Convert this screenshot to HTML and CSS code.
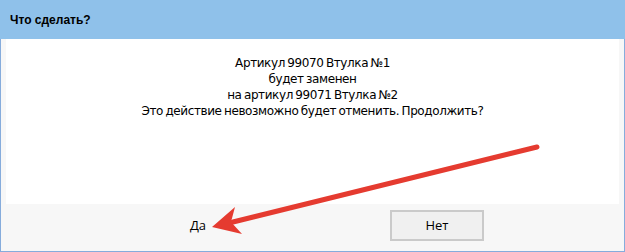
FILE: index.html
```html
<!DOCTYPE html>
<html lang="ru">

<head>
  <meta charset="UTF-8">
  <title>Что сделать?</title>
  <link rel="stylesheet" href="styles.css">
</head>

<body>
  <div class="window">
    <div class="title-bar">Что сделать?</div>
    <div class="panel">
      <div class="message">
        <p>Артикул 99070 Втулка №1</p>
        <p>будет заменен</p>
        <p>на артикул 99071 Втулка №2</p>
        <p>Это действие невозможно будет отменить. Продолжить?</p>
      </div>
    </div>
    <div class="footer">
      <div class="btn flat">Да</div>
      <div class="btn">Нет</div>
    </div>
    <svg class="arrow" width="625" height="252" viewBox="0 0 625 252">
      <line x1="233" y1="222" x2="537" y2="147" stroke="#e53b30" stroke-width="5" stroke-linecap="round" />
      <polygon points="212,227 235,207 231,222 242,234" fill="#e53b30" />
    </svg>
  </div>
</body>

</html>
```

FILE: styles.css
```css
:root {
  --color-title: #8fc1ea;
  --color-border: #86acdc;
  --color-panel: #f7f7f7;
  --color-btn: #f0f0f0;
  --color-btn-border: #cacaca;
}

html,
body {
  margin: 0;
  width: 625px;
  height: 252px;
  overflow: hidden;
}

.window {
  position: relative;
  box-sizing: border-box;
  width: 625px;
  height: 252px;
  display: flex;
  flex-direction: column;
  background: var(--color-panel);
  border: 1px solid var(--color-border);
  border-top: 0;
}

.title-bar {
  height: 39px;
  margin: 0 -1px;
  padding-left: 10px;
  background: var(--color-title);
  font: bold 12px/41px "Liberation Sans", sans-serif;
  color: #000;
}

.panel {
  padding: 0 5px;
}

.message {
  height: 165px;
  box-sizing: border-box;
  padding-top: 16px;
  background: #fff;
  text-align: center;
  font: 12px/16px "DejaVu Sans", sans-serif;
  letter-spacing: -0.4px;
  word-spacing: -1px;
  color: #000;

  & p {
    margin: 0;
  }
}

.footer {
  flex: 1;
  display: flex;
  align-items: flex-start;
  gap: 145px;
  padding: 6px 0 0 150px;
}

.btn {
  box-sizing: border-box;
  width: 94px;
  height: 31px;
  text-align: center;
  font: 13px/27px "Open Sans", sans-serif;
  color: #000;
  background: var(--color-btn);
  border: 2px solid var(--color-btn-border);

  &.flat {
    background: transparent;
    border-color: transparent;
  }
}

.arrow {
  position: absolute;
  left: -1px;
  top: 0;
}
```
